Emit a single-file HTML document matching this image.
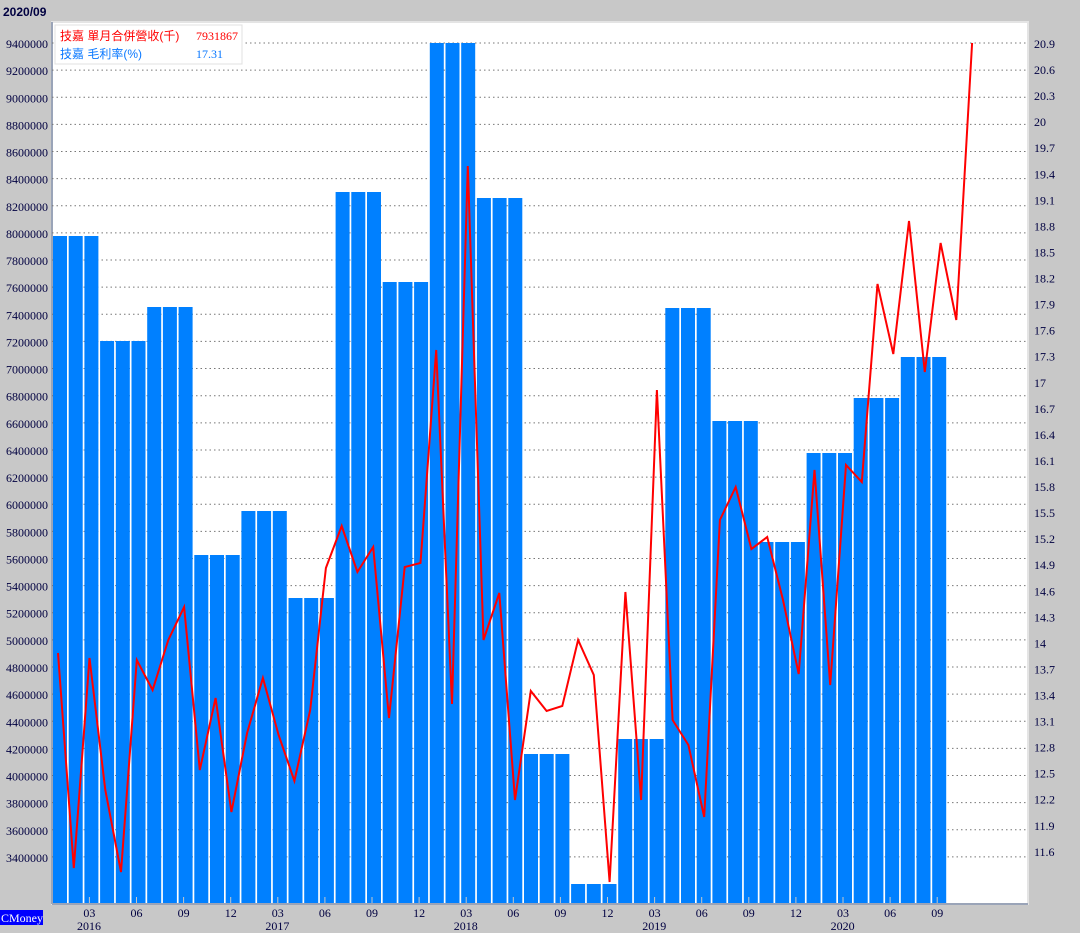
<!DOCTYPE html><html><head><meta charset="utf-8"><style>body{margin:0;background:#c8c8c8;}svg{display:block}</style></head><body>
<svg id="s" width="1080" height="933" xmlns="http://www.w3.org/2000/svg" font-family="Liberation Serif, serif" font-size="12" fill="#000040">
<rect width="1080" height="933" fill="#c8c8c8"/>
<text x="3" y="16" font-family="Liberation Sans, sans-serif" font-weight="bold" font-size="12" fill="#000040">2020/09</text>
<rect x="52" y="22" width="976" height="882" fill="#fff" stroke="#e4e4e4" stroke-width="2"/>
<line x1="52" y1="904" x2="1028" y2="904" stroke="#9aa4b8" stroke-width="2"/>
<line x1="52" y1="22" x2="52" y2="904" stroke="#9aa4b8" stroke-width="2"/>
<g id="grid" stroke="#777" stroke-dasharray="1.5,3" stroke-width="1"></g>
<g id="bars" fill="#0080ff"></g>
<g id="ticks" stroke="#c8c8c8"></g>
<polyline id="ln" fill="none" stroke="#ff0000" stroke-width="2"/>
<g id="lab"></g>
<rect x="55" y="25" width="187" height="39" fill="#fff" stroke="#e0e0e0"/>
<text x="60" y="40" font-family="Liberation Sans, 'Noto Sans CJK TC', sans-serif" fill="#ff0000" font-size="12">技嘉 單月合併營收(千)</text>
<text x="196" y="40" fill="#ff0000" font-size="12">7931867</text>
<text x="60" y="58" font-family="Liberation Sans, 'Noto Sans CJK TC', sans-serif" fill="#0a78ff" font-size="12">技嘉 毛利率(%)</text>
<text x="196" y="58" fill="#0a78ff" font-size="12">17.31</text>
<rect x="0" y="910" width="43" height="15" fill="#0000ff"/>
<text x="1" y="922" fill="#fff" font-size="12">CMoney</text>
</svg>
<script>
const NS="http://www.w3.org/2000/svg";const P=15.7,L=15.76;
function el(p,t,a,txt){const e=document.createElementNS(NS,t);for(const k in a)e.setAttribute(k,a[k]);if(txt)e.textContent=txt;document.getElementById(p).appendChild(e);}
for(let i=0;i<=30;i++){const v=9400000-i*200000;const y=43+i*27.13;el('grid','line',{x1:52,x2:1027,y1:y,y2:y});el('lab','text',{x:48,y:y+5,'text-anchor':'end'},String(v));}
for(let i=0;i<=31;i++){const y=43+i*26.06;el('lab','text',{x:1034,y:y+5},(20.9-i*0.3).toFixed(1).replace(/\.0$/,''));}
const q=[236,341,307,555,511,598,192,282,43,198,754,884,739,308,421,542,453,398,357];
q.forEach((t,k)=>{for(let j=0;j<3;j++){const i=k*3+j;const x=52+i*P+1;el('bars','rect',{x:x.toFixed(1),y:t,width:14,height:903-t});}});
for(let i=2;i<57;i+=3){const x=58+i*P;el('ticks','line',{x1:x,x2:x,y1:897,y2:903});const m=['03','06','09','12'][(i-2)/3%4];el('lab','text',{x:x,y:917,'text-anchor':'middle'},m);}
[2016,2017,2018,2019,2020].forEach((y,k)=>el('lab','text',{x:89+k*12*P,y:930,'text-anchor':'middle'},String(y)));
const ys=[653,868,658,790,872,660,690,640,607,770,698,812,733,678,735,781,710,568,526,572,547,718,567,563,350,704,166,640,593,800,691,711,706,640,675,882,592,800,390,720,745,817,520,487,549,537,600,674,470,685,465,482,284,354,221,372,243,320,43];
document.getElementById('ln').setAttribute('points',ys.map((y,i)=>(58+i*L).toFixed(1)+','+y).join(' '));
</script>
</body></html>
